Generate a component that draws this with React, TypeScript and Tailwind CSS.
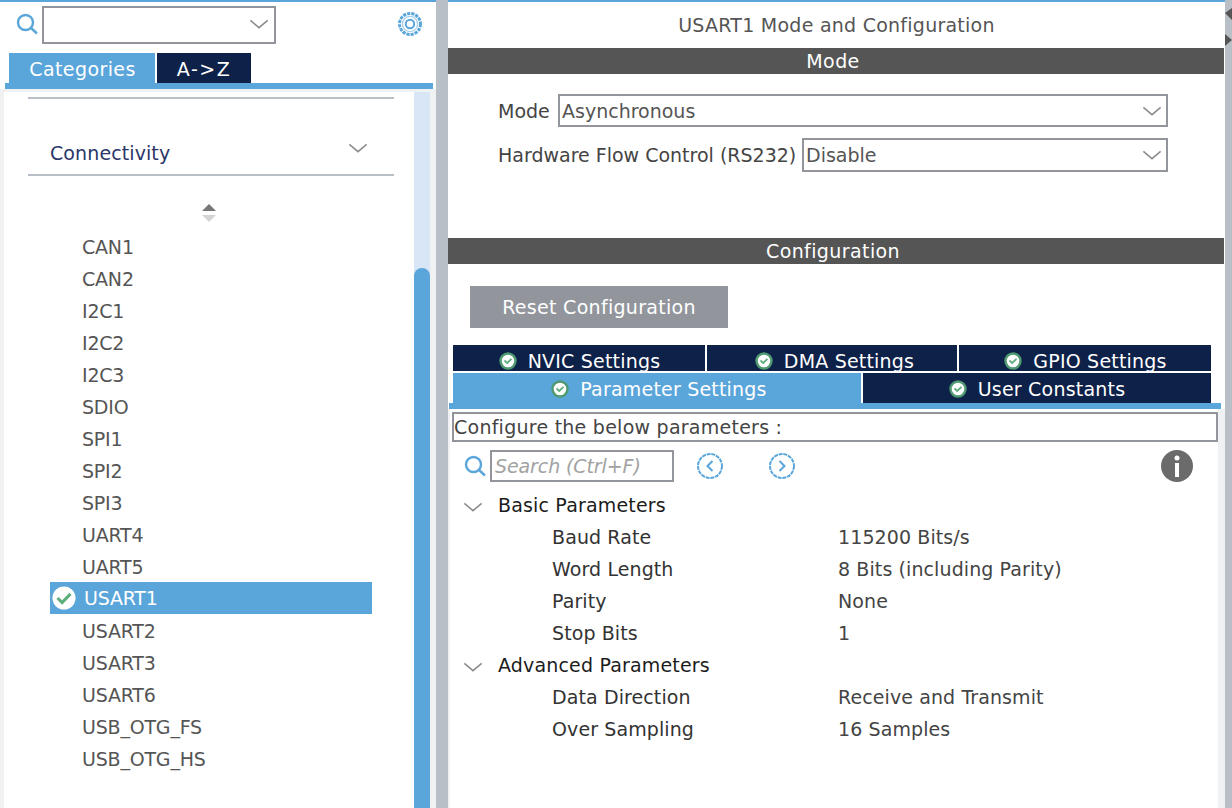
const font = "font-['DejaVu_Sans',sans-serif]";

function Chevron({ className = "" }: { className?: string }) {
  return (
    <svg width="20" height="11" viewBox="0 0 22 12" fill="none" className={className}>
      <polyline points="1.5,1.5 11,9.5 20.5,1.5" stroke="#8a8c8e" strokeWidth="1.7" />
    </svg>
  );
}

function SearchIcon({ size = 22 }: { size?: number }) {
  return (
    <svg width={size} height={size} viewBox="0 0 22 22" fill="none">
      <circle cx="9.5" cy="9.5" r="7.5" stroke="#5aa5da" strokeWidth="2.4" />
      <line x1="15" y1="15" x2="21" y2="20.5" stroke="#5aa5da" strokeWidth="2.4" />
    </svg>
  );
}

function Gear() {
  return (
    <svg width="26" height="26" viewBox="0 0 26 26" fill="none">
      <circle cx="13" cy="13" r="10.5" stroke="#5aa5da" strokeWidth="3" strokeDasharray="3.2 1" />
      <circle cx="13" cy="13" r="7.6" stroke="#a9d0ec" strokeWidth="1.4" />
      <circle cx="13" cy="13" r="4.2" stroke="#5aa5da" strokeWidth="2" />
    </svg>
  );
}

function TabCheck() {
  return (
    <svg width="18" height="18" viewBox="0 0 18 18" fill="none">
      <circle cx="9" cy="9" r="7.5" fill="#ffffff" stroke="#4f9a70" strokeWidth="2.4" />
      <polyline points="5.5,8.5 8.2,11 12.5,6.8" stroke="#5fae7e" strokeWidth="1.8" />
    </svg>
  );
}

function RoundArrow({ left }: { left?: boolean }) {
  return (
    <svg width="28" height="28" viewBox="0 0 28 28" fill="none">
      <circle cx="14" cy="14" r="12" stroke="#5aa5da" strokeWidth="2" strokeDasharray="4 0.8" />
      <polyline
        points={left ? "16.5,9 11.5,14 16.5,19" : "11.5,9 16.5,14 11.5,19"}
        stroke="#5aa5da"
        strokeWidth="2"
      />
    </svg>
  );
}

function InfoIcon() {
  return (
    <svg width="32" height="32" viewBox="0 0 32 32">
      <circle cx="16" cy="16" r="16" fill="#6b6b6b" />
      <rect x="13.5" y="5.5" width="5" height="5" rx="2.5" fill="#ffffff" />
      <rect x="14" y="13" width="4" height="14" fill="#ffffff" />
    </svg>
  );
}

function Select({ value, className }: { value: string; className: string }) {
  return (
    <div className={`border-2 border-[#92969c] flex items-center justify-between pl-[2px] pr-[4px] text-[#555555] ${className}`}>
      <span>{value}</span>
      <Chevron />
    </div>
  );
}

function Tab({ label, className }: { label: string; className: string }) {
  return (
    <div className={`flex items-center justify-center gap-[11px] text-white tracking-[0.2px] ${className}`}>
      <TabCheck />
      <span>{label}</span>
    </div>
  );
}

const peripherals = ["CAN1", "CAN2", "I2C1", "I2C2", "I2C3", "SDIO", "SPI1", "SPI2", "SPI3", "UART4", "UART5"];
const peripherals2 = ["USART2", "USART3", "USART6", "USB_OTG_FS", "USB_OTG_HS"];

function ParamRow({ name, value }: { name: string; value: string }) {
  return (
    <div className="h-8 flex items-center pl-[102px] text-[#333333] tracking-[0.1px]">
      <span className="w-[286px]">{name}</span>
      <span className="text-[#444444]">{value}</span>
    </div>
  );
}

function ParamHead({ label }: { label: string }) {
  return (
    <div className="h-8 flex items-center pl-[13px] text-[#1c1c1c] tracking-[0.17px]">
      <Chevron className="mr-[15px] mt-[4px]" />
      <span>{label}</span>
    </div>
  );
}

function ListRow({ label }: { label: string }) {
  return <div className="h-8 flex items-center pl-[78px] pt-[2px] text-[#555555] shrink-0">{label}</div>;
}

export default function App() {
  return (
    <div className={`w-[1232px] h-[808px] overflow-hidden bg-white flex text-[19px] tracking-[-0.2px] ${font}`}>
      {/* left panel */}
      <div className="w-[436px] h-full flex flex-col border-t-2 border-[#5aa5da]">
        <div className="h-[51px] flex items-start">
          <div className="ml-[16px] mt-[11px]">
            <SearchIcon />
          </div>
          <div className="ml-[4px] mt-[4px] w-[234px] h-[38px] border-2 border-[#92969c] flex items-center justify-end pr-[5px] pb-[2px]">
            <Chevron />
          </div>
          <div className="ml-[121px] mt-[9px]">
            <Gear />
          </div>
        </div>
        <div className="h-[30px] flex pl-[9px] gap-[2px]">
          <div className="w-[146px] pt-[2px] pl-[1px] bg-[#5aa5da] text-white flex items-center justify-center tracking-[0.4px]">Categories</div>
          <div className="w-[94px] pt-[2px] bg-[#0e2148] text-white flex items-center justify-center tracking-[1.5px]">A-&gt;Z</div>
        </div>
        <div className="ml-[5px] w-[428px] h-[6px] bg-[#5aa5da] shrink-0" />
        <div className="flex-1 flex min-h-0 pt-[3px] pl-[4px] pr-[6px] bg-[#f0f1f3]">
          <div className="flex-1 bg-white flex min-w-0">
            <div className="flex-1 flex flex-col min-w-0">
              <div className="mt-[5px] ml-[24px] mr-[20px] h-[2px] bg-[#b9bfc6]" />
              <div className="ml-[24px] mr-[20px] h-[77px] border-b-2 border-[#b9bfc6] flex items-start justify-between pl-[22px] pr-[26px] tracking-[0.1px]">
                <span className="mt-[40px] text-[#2a3768]">Connectivity</span>
                <Chevron className="mt-[44px]" />
              </div>
              <div className="h-[54px] flex justify-center pt-[26px] shrink-0">
                <svg width="18" height="24" viewBox="0 0 18 24">
                  <polygon points="9,2 16,9 2,9" fill="#777777" />
                  <polygon points="2,13 16,13 9,20" fill="#d4d4d4" />
                </svg>
              </div>
              {peripherals.map((p) => (
                <ListRow key={p} label={p} />
              ))}
              <div className="ml-[46px] w-[322px] h-8 bg-[#5aa5da] text-white flex items-center pl-[2px] gap-[8px] shrink-0">
                <svg width="24" height="24" viewBox="0 0 26 26" fill="none">
                  <circle cx="13" cy="13" r="12.5" fill="#ffffff" />
                  <polyline points="6,13 11,18 20,8.5" stroke="#5fae7e" strokeWidth="3.4" />
                </svg>
                <span>USART1</span>
              </div>
              {peripherals2.map((p) => (
                <ListRow key={p} label={p} />
              ))}
            </div>
            <div className="w-4 bg-[#d9e6f5] flex flex-col">
              <div className="h-[176px] shrink-0" />
              <div className="flex-1 bg-[#5aa5da] rounded-t-lg" />
            </div>
          </div>
        </div>
      </div>

      {/* divider */}
      <div className="w-3 h-full bg-[#b9bfc6]" />

      {/* right panel */}
      <div className="w-[777px] h-full flex flex-col border-t-2 border-[#5aa5da]">
        <div className="h-[46px] flex items-center justify-center text-[#555555] tracking-[0.25px]">USART1 Mode and Configuration</div>
        <div className="h-[26px] mr-[1px] pr-[6px] bg-[#545554] text-white flex items-center justify-center tracking-[0.4px]">Mode</div>
        <div className="pl-[50px] pt-[20px] h-[164px] tracking-[0px]">
          <div className="flex items-center text-[#444444]">
            <span className="w-[60px] pt-[1px]">Mode</span>
            <Select value="Asynchronous" className="w-[610px] h-[33px] pt-[1px]" />
          </div>
          <div className="flex items-center mt-[11px] text-[#444444]">
            <span className="w-[304px]">Hardware Flow Control (RS232)</span>
            <Select value="Disable" className="w-[366px] h-[34px]" />
          </div>
        </div>
        <div className="h-[26px] mr-[1px] pr-[6px] bg-[#545554] text-white flex items-center justify-center tracking-[0.4px]">Configuration</div>
        <div className="pl-[22px] pt-[22px]">
          <div className="w-[258px] h-[42px] bg-[#92969c] text-white flex items-center justify-center tracking-[0.3px]">Reset Configuration</div>
        </div>
        <div className="pl-[5px] mt-[17px] w-[763px] flex flex-col gap-[2px]">
          <div className="flex gap-[2px] h-[26px] overflow-hidden">
            <Tab label="NVIC Settings" className="w-[252px] bg-[#0e2148] pt-[6px] pl-[1px]" />
            <Tab label="DMA Settings" className="w-[250px] bg-[#0e2148] pt-[6px] pl-[5px]" />
            <Tab label="GPIO Settings" className="w-[252px] bg-[#0e2148] pt-[6px] pl-[1px]" />
          </div>
          <div className="flex gap-[2px] h-[30px]">
            <Tab label="Parameter Settings" className="w-[408px] bg-[#5aa5da] pt-[2px] pl-[4px]" />
            <Tab label="User Constants" className="w-[348px] bg-[#0e2148] pt-[2px]" />
          </div>
        </div>
        <div className="ml-[1px] w-[772px] h-[6px] bg-[#5aa5da] shrink-0" />
        <div className="flex-1 flex bg-[#f0f1f3] pl-[2px] pr-[7px] min-h-0">
          <div className="flex-1 bg-white flex flex-col min-w-0">
            <div className="mt-[3px] ml-[2px] h-[30px] border-2 border-[#92969c] flex items-center text-[#444444] tracking-[0.25px] shrink-0">Configure the below parameters :</div>
            <div className="h-[32px] mt-[8px] flex items-center shrink-0">
              <div className="ml-[14px]">
                <SearchIcon />
              </div>
              <div className="ml-[4px] w-[184px] h-[32px] border-2 border-[#92969c] flex items-center pl-[3px] pt-[1px] text-[#a2a2a2] italic tracking-[-0.1px]">Search (Ctrl+F)</div>
              <div className="ml-[22px]">
                <RoundArrow left />
              </div>
              <div className="ml-[44px]">
                <RoundArrow />
              </div>
              <div className="ml-auto mr-[25px]">
                <InfoIcon />
              </div>
            </div>
            <div className="mt-[7px]">
              <ParamHead label="Basic Parameters" />
              <ParamRow name="Baud Rate" value="115200 Bits/s" />
              <ParamRow name="Word Length" value="8 Bits (including Parity)" />
              <ParamRow name="Parity" value="None" />
              <ParamRow name="Stop Bits" value="1" />
              <ParamHead label="Advanced Parameters" />
              <ParamRow name="Data Direction" value="Receive and Transmit" />
              <ParamRow name="Over Sampling" value="16 Samples" />
            </div>
          </div>
        </div>
      </div>

      {/* right edge */}
      <div className="w-[7px] h-full bg-[#b9bfc6] flex flex-col items-center pt-[8px]">
        <svg width="7" height="38" viewBox="0 0 7 38">
          <polygon points="0,5 7,0 7,12" fill="#555555" />
          <polygon points="0,26 7,32 0,38" fill="#555555" />
        </svg>
      </div>
    </div>
  );
}
